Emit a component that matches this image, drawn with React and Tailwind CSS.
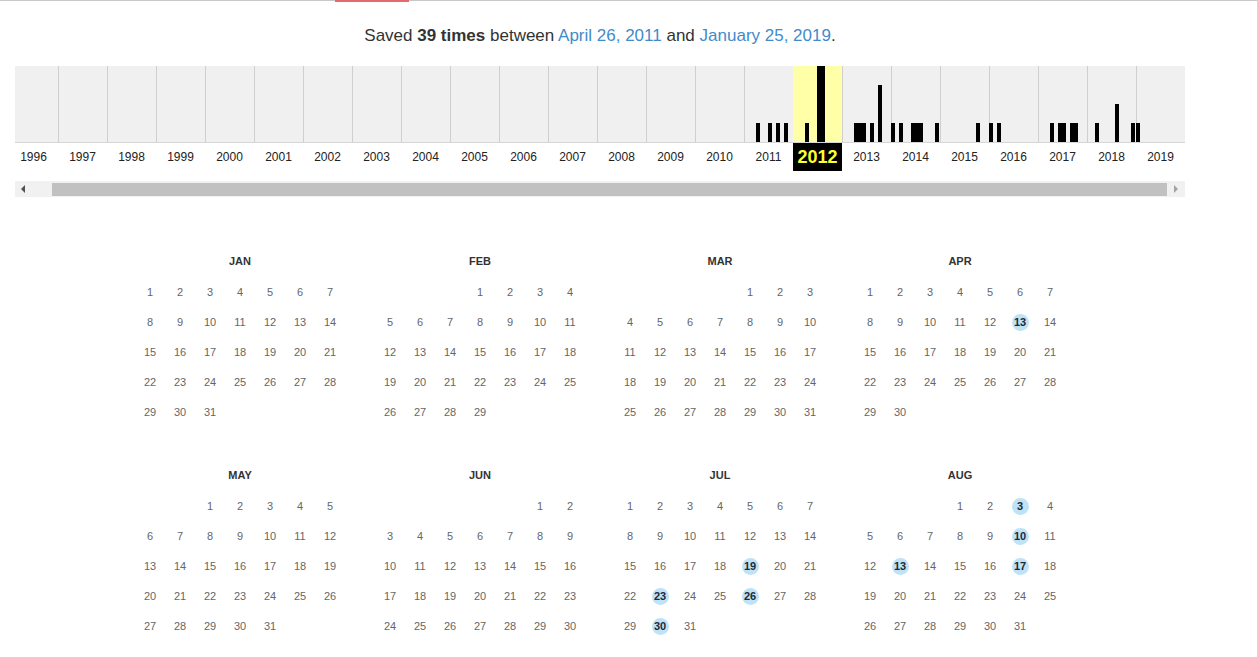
import React from 'react';

const YEARS = Array.from({ length: 24 }, (_, i) => 1996 + i);

// saves per month (0 = Jan) for each year
const SAVES = {
  2011: { 3: 1, 6: 1, 8: 1, 10: 1 },
  2012: { 3: 1, 6: 4, 7: 4 },
  2013: { 3: 1, 4: 1, 5: 1, 7: 1, 9: 3 },
  2014: { 0: 1, 2: 1, 5: 1, 6: 1, 7: 1, 11: 1 },
  2015: { 9: 1 },
  2016: { 0: 1, 2: 1 },
  2017: { 3: 1, 5: 1, 6: 1, 8: 1, 9: 1 },
  2018: { 2: 1, 7: 2, 11: 1 },
  2019: { 0: 1 },
};

const MONTHS = ['JAN', 'FEB', 'MAR', 'APR', 'MAY', 'JUN', 'JUL', 'AUG', 'SEP', 'OCT', 'NOV', 'DEC'];

// captured days in 2012
const CAPTURED = {
  3: [13],
  6: [19, 23, 26, 30],
  7: [3, 10, 13, 17],
};

const SELECTED = 2012;

function YearColumn({ year }) {
  const months = SAVES[year] || {};
  const selected = year === SELECTED;
  return (
    <div className="w-[49px] shrink-0 flex flex-col">
      <div
        className={`h-[77px] flex items-end border-b border-[#d6d6d6] ${
          selected ? 'bg-[#ffffa8]' : 'bg-[#f0f0f0] border-l border-l-[#cfcfcf]'
        }`}
      >
        <div className={`flex items-end h-full ${selected ? '' : '-ml-px'}`}>
          {Array.from({ length: 12 }, (_, m) => (
            <div key={m} className="w-[4px] h-full flex items-end">
              {months[m] ? (
                <div className="w-[4px] bg-black" style={{ height: months[m] * 19 }} />
              ) : null}
            </div>
          ))}
        </div>
      </div>
      {selected ? (
        <div className="h-[28px] bg-black flex items-center justify-center text-[18px] font-bold text-[#ffff2e]">
          {year}
        </div>
      ) : (
        <div className="h-[28px] flex items-center justify-center text-[12px] text-[#222]">{year}</div>
      )}
    </div>
  );
}

function Month({ index }) {
  const first = new Date(SELECTED, index, 1).getDay();
  const count = new Date(SELECTED, index + 1, 0).getDate();
  const cells = [];
  for (let i = 0; i < first; i++) cells.push(null);
  for (let d = 1; d <= count; d++) cells.push(d);
  const hits = CAPTURED[index] || [];
  return (
    <div className="w-[240px] h-[206px] px-[15px] pt-[1px]">
      <div className="h-[20px] flex items-center justify-center text-[11px] font-bold text-[#333]">
        {MONTHS[index]}
      </div>
      <div className="mt-[6px] grid grid-cols-7">
        {cells.map((d, i) => (
          <div key={i} className="h-[30px] w-[30px] flex items-center justify-center">
            {d && hits.includes(d) ? (
              <span className="w-[17px] h-[17px] rounded-full bg-[#bfe2f6] flex items-center justify-center text-[11px] font-bold text-[#1d2a35]">
                {d}
              </span>
            ) : (
              <span className="text-[11px] text-[#666]">{d}</span>
            )}
          </div>
        ))}
      </div>
    </div>
  );
}

export default function App() {
  return (
    <div className="min-h-screen bg-white font-['Liberation_Sans',Arial,sans-serif]">
      {/* top rule with red marker */}
      <div className="h-px bg-[#c8c8c8] flex">
        <div className="ml-[335px] w-[74px] h-[2px] bg-[#e46b6b]" />
      </div>

      <div className="w-[1200px]">
        <div className="pt-[24px] text-center text-[17px] leading-[22px] text-[#333]">
          Saved <b>39 times</b> between{' '}
          <a className="text-[#428bca]">April 26, 2011</a> and{' '}
          <a className="text-[#428bca]">January 25, 2019</a>.
        </div>

        {/* year histogram */}
        <div className="mx-[15px] mt-[19px] w-[1170px] overflow-hidden">
          <div className="flex -ml-[6px]">
            {YEARS.map((y) => (
              <YearColumn key={y} year={y} />
            ))}
          </div>
        </div>

        {/* scrollbar */}
        <div className="mx-[15px] mt-[10px] w-[1170px] h-[16px] bg-[#f1f1f1] flex items-center">
          <div className="w-[16px] h-[16px] flex items-center justify-center">
            <div className="w-0 h-0 border-y-[4px] border-y-transparent border-r-[4px] border-r-[#505050]" />
          </div>
          <div className="ml-[21px] w-[1115px] h-[13px] bg-[#c1c1c1]" />
          <div className="flex-1 h-[16px] flex items-center justify-center">
            <div className="w-0 h-0 border-y-[4px] border-y-transparent border-l-[4px] border-l-[#a3a3a3]" />
          </div>
        </div>

        {/* calendar */}
        <div className="mt-[53px] mx-auto w-[960px] grid grid-cols-4 gap-y-[8px]">
          {MONTHS.map((_, i) => (
            <Month key={i} index={i} />
          ))}
        </div>
      </div>
    </div>
  );
}
